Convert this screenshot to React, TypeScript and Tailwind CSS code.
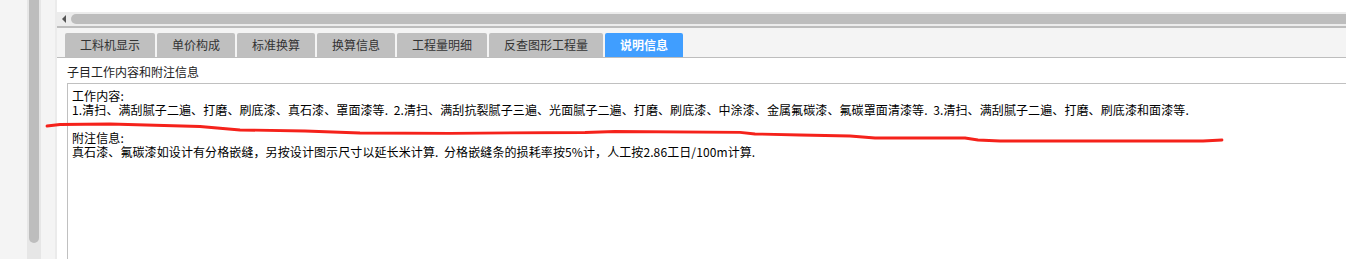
const tabs = ["工料机显示", "单价构成", "标准换算", "换算信息", "工程量明细", "反查图形工程量", "说明信息"];

const active = "说明信息";

export default function App() {
  return (
    <div className="relative flex h-[259px] w-[1346px] overflow-hidden bg-white font-['Noto_Sans_CJK_SC',sans-serif] text-[12px]">
      {/* left side + vertical scrollbar */}
      <div className="flex h-full w-[57px] shrink-0">
        <div className="w-[27px] bg-[#f4f4f4]" />
        <div className="w-[14px] bg-[#e6e6e6] px-[2px]">
          <div className="h-[243px] rounded-b-[5px] bg-[#bdbdbd]" />
        </div>
        <div className="w-[14px] bg-[#f4f4f4]" />
        <div className="w-[2px] bg-[#ebebeb]" />
      </div>

      <div className="flex min-w-0 flex-1 flex-col">
        <div className="h-[12px] shrink-0 bg-white" />
        {/* horizontal scrollbar */}
        <div className="flex h-[14px] shrink-0 items-center bg-[#ececec]">
          <div className="flex w-[14px] items-center justify-center">
            <div className="h-0 w-0 border-y-[4px] border-r-[4px] border-y-transparent border-r-[#555]" />
          </div>
          <div className="h-[10px] flex-1 rounded-l-[5px] bg-[#bdbdbd]" />
        </div>
        <div className="h-[2px] shrink-0 bg-[#bdbdbd]" />

        {/* tabs */}
        <div className="flex h-[30px] shrink-0 items-end gap-[2px] border-b border-[#bdbdbd] bg-[#f4f4f4] pl-[8px]">
          {tabs.map((t) => (
            <div
              key={t}
              className={
                t === active
                  ? "flex h-[24px] items-center rounded-t-[2px] bg-[#409eff] px-[15px] font-bold leading-none text-white"
                  : "flex h-[24px] items-center rounded-t-[2px] bg-[#bfbfbf] px-[15px] leading-none text-[#333]"
              }
            >
              {t}
            </div>
          ))}
        </div>

        <div className="pl-[10px]">
          <div className="mt-[6px] leading-[16px] text-[#222]">子目工作内容和附注信息</div>
          <div className="mt-[3px] h-[200px] w-[1400px] border border-[#c0c0c0] pl-[4px] pt-[5px] leading-[14px] tracking-[0.1px] text-black">
            <div>工作内容:</div>
            <div className="whitespace-pre">
              1.清扫、满刮腻子二遍、打磨、刷底漆、真石漆、罩面漆等.  2.清扫、满刮抗裂腻子三遍、光面腻子二遍、打磨、刷底漆、中涂漆、金属氟碳漆、氟碳罩面清漆等.  3.清扫、满刮腻子二遍、打磨、刷底漆和面漆等.
            </div>
            <div className="h-[14px]" />
            <div>附注信息:</div>
            <div className="whitespace-pre">
              真石漆、氟碳漆如设计有分格嵌缝，另按设计图示尺寸以延长米计算.  分格嵌缝条的损耗率按5%计，人工按2.86工日/100m计算.
            </div>
          </div>
        </div>
      </div>

      {/* red hand-drawn annotation */}
      <svg className="pointer-events-none absolute left-0 top-0" width="1346" height="259">
        <polyline
          points="47,126 60,124.5 110,124 200,126.5 240,130 305,131 360,133 450,133.3 585,132.5 615,131.5 740,132.3 755,134 800,135 850,136 875,138 965,138 978,140 1000,141 1203,141 1222,140"
          fill="none"
          stroke="#f5221b"
          strokeWidth="2.8"
          strokeLinejoin="round"
          strokeLinecap="round"
        />
      </svg>
    </div>
  );
}
